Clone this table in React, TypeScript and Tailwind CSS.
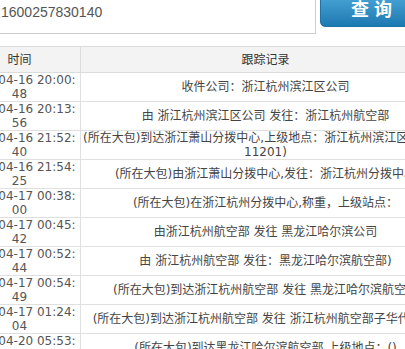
import React from "react";

const rows: { time: [string, string]; text: React.ReactNode }[] = [
  { time: ["2015-04-16 20:00:", "48"], text: "收件公司：浙江杭州滨江区公司" },
  { time: ["2015-04-16 20:13:", "56"], text: "由 浙江杭州滨江区公司 发往：浙江杭州航空部" },
  {
    time: ["2015-04-16 21:52:", "40"],
    text: (
      <div className="text-left">
        <div className="whitespace-nowrap">(所在大包)到达浙江萧山分拨中心,上级地点：浙江杭州滨江区公司(0571</div>
        <div className="text-center">11201)</div>
      </div>
    ),
  },
  { time: ["2015-04-16 21:54:", "25"], text: "(所在大包)由浙江萧山分拨中心,发往：浙江杭州分拨中心" },
  { time: ["2015-04-17 00:38:", "00"], text: "(所在大包)在浙江杭州分拨中心,称重，上级站点：" },
  { time: ["2015-04-17 00:45:", "42"], text: "由浙江杭州航空部 发往 黑龙江哈尔滨公司" },
  { time: ["2015-04-17 00:52:", "44"], text: "由 浙江杭州航空部 发往：黑龙江哈尔滨航空部)" },
  { time: ["2015-04-17 00:54:", "49"], text: "(所在大包)到达浙江杭州航空部 发往 黑龙江哈尔滨航空部" },
  { time: ["2015-04-17 01:24:", "04"], text: "(所在大包)到达浙江杭州航空部 发往 浙江杭州航空部子华代理点)" },
  { time: ["2015-04-20 05:53:", "18"], text: "(所在大包)到达黑龙江哈尔滨航空部,上级地点：()" },
];

const font = { fontFamily: '"DejaVu Sans", "Noto Sans CJK SC", sans-serif' };

const App = () => {
  return (
    <div className="w-[405px] h-[349px] overflow-hidden bg-white" style={font}>
      {/* Search bar */}
      <div className="flex items-start">
        <div className="w-[316px] h-[42px] -mt-[8px] border border-l-0 border-[#cfcfcf] bg-white flex items-center pb-[2px] pl-[1px] shrink-0">
          <span
            className="text-[14px] text-[#555]"
            style={{ fontFamily: '"Liberation Sans", Arial, sans-serif' }}
          >
            1600257830140
          </span>
        </div>
        <button className="ml-[4px] w-[103px] h-[36px] -mt-[9px] shrink-0 rounded-bl-[5px] bg-gradient-to-b from-[#4ea9db] to-[#1b79b1] border border-[#1f73a6] text-white text-[18px] font-bold tracking-[5px] pl-[5px]">
          查询
        </button>
      </div>

      {/* Tracking table */}
      <table className="mt-[12px] -ml-[42px] w-[492px] table-fixed border-collapse text-[12px] leading-[14px]">
        <colgroup>
          <col className="w-[122px]" />
          <col className="w-[370px]" />
        </colgroup>
        <thead>
          <tr className="h-[26px] bg-[#f3f3f3] text-[#333]">
            <th className="border border-[#dcdcdc] font-normal text-center">时间</th>
            <th className="border border-[#dcdcdc] font-normal text-center">跟踪记录</th>
          </tr>
        </thead>
        <tbody>
          {rows.map((r, i) => (
            <tr key={i} className="h-[29px]">
              <td className="border border-[#e0e0e0] text-center text-[#555] p-0 align-middle">
                <div className="whitespace-nowrap">{r.time[0]}</div>
                <div>{r.time[1]}</div>
              </td>
              <td className="border border-[#e0e0e0] text-center text-[#444] pl-[2px] pr-[2px] py-0 align-middle overflow-hidden">
                {r.text}
              </td>
            </tr>
          ))}
        </tbody>
      </table>
    </div>
  );
};

export default App;
